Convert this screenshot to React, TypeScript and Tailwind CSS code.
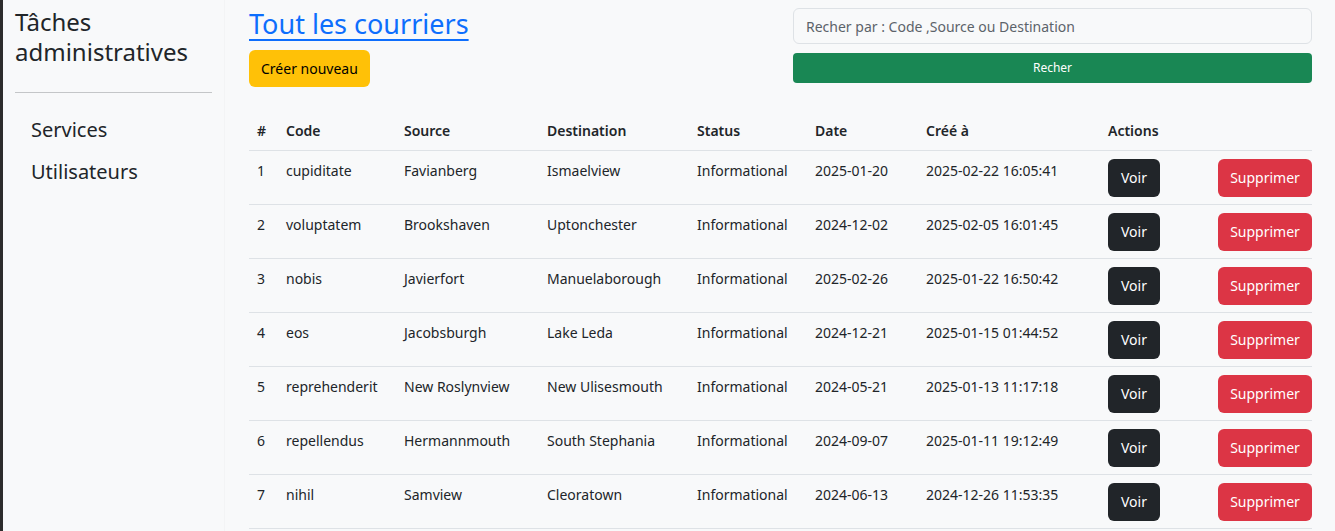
import React from 'react';

type Courrier = {
  code: string;
  source: string;
  destination: string;
  status: string;
  date: string;
  createdAt: string;
};

const courriers: Courrier[] = [
  { code: 'cupiditate', source: 'Favianberg', destination: 'Ismaelview', status: 'Informational', date: '2025-01-20', createdAt: '2025-02-22 16:05:41' },
  { code: 'voluptatem', source: 'Brookshaven', destination: 'Uptonchester', status: 'Informational', date: '2024-12-02', createdAt: '2025-02-05 16:01:45' },
  { code: 'nobis', source: 'Javierfort', destination: 'Manuelaborough', status: 'Informational', date: '2025-02-26', createdAt: '2025-01-22 16:50:42' },
  { code: 'eos', source: 'Jacobsburgh', destination: 'Lake Leda', status: 'Informational', date: '2024-12-21', createdAt: '2025-01-15 01:44:52' },
  { code: 'reprehenderit', source: 'New Roslynview', destination: 'New Ulisesmouth', status: 'Informational', date: '2024-05-21', createdAt: '2025-01-13 11:17:18' },
  { code: 'repellendus', source: 'Hermannmouth', destination: 'South Stephania', status: 'Informational', date: '2024-09-07', createdAt: '2025-01-11 19:12:49' },
  { code: 'nihil', source: 'Samview', destination: 'Cleoratown', status: 'Informational', date: '2024-06-13', createdAt: '2024-12-26 11:53:35' },
];

const Sidebar = () => (
  <aside className="w-[222px] shrink-0 bg-[#f8f9fa] px-3 border-r border-[#f3f4f5]">
    <h3 className="text-[24px] leading-[30px] text-[#212529] pt-[7px]">Tâches administratives</h3>
    <hr className="mt-[25px] border-t border-[#c4c6c8]" />
    <ul className="mt-[23px] pl-4 space-y-[14px]">
      <li className="text-[20px] leading-[28px] text-[#212529]">Services</li>
      <li className="text-[20px] leading-[28px] text-[#212529]">Utilisateurs</li>
    </ul>
  </aside>
);

export default function App() {
  return (
    <div
      className="flex h-[531px] overflow-hidden bg-[#f8f9fa] text-[#212529]"
      style={{ fontFamily: '"Noto Sans", "Open Sans", sans-serif' }}
    >
      <div className="w-[3px] shrink-0 bg-[#2c2c2c]" />
      <Sidebar />
      <main className="flex-1 pl-6 pr-[23px]">
        {/* En-tête : titre + recherche */}
        <div className="flex justify-between">
          <div>
            <a className="block text-[27px] leading-[36px] text-[#0d6efd] underline underline-offset-[5px] decoration-[2px] pt-[6px]">
              Tout les courriers
            </a>
            <button className="mt-[8px] h-[37px] px-3 rounded-md bg-[#ffc107] text-[14px] text-black">
              Créer nouveau
            </button>
          </div>
          <div className="w-[519px] pt-2">
            <div className="h-[36px] rounded-md border border-[#dee2e6] bg-[#f8f9fa] px-3 flex items-center text-[14px] text-[#5c636a]">
              Recher par : Code ,Source ou Destination
            </div>
            <button className="mt-[9px] w-full h-[30px] rounded bg-[#198754] text-[12px] text-white">
              Recher
            </button>
          </div>
        </div>

        {/* Tableau des courriers */}
        <table className="mt-[25px] w-full table-fixed border-collapse text-[14px]">
          <colgroup>
            <col className="w-[29px]" />
            <col className="w-[118px]" />
            <col className="w-[143px]" />
            <col className="w-[150px]" />
            <col className="w-[118px]" />
            <col className="w-[111px]" />
            <col className="w-[182px]" />
            <col className="w-[110px]" />
            <col />
          </colgroup>
          <thead>
            <tr className="border-b border-[#dee2e6]">
              {['#', 'Code', 'Source', 'Destination', 'Status', 'Date', 'Créé à', 'Actions', ''].map((h, i) => (
                <th key={i} className="px-2 py-2 text-left font-semibold leading-[21.6px] whitespace-nowrap">
                  {h}
                </th>
              ))}
            </tr>
          </thead>
          <tbody>
            {courriers.map((c, i) => (
              <tr key={i} className="border-b border-[#dee2e6] align-top">
                <td className="px-2 pt-[9px] leading-[21.6px]">{i + 1}</td>
                <td className="px-2 pt-[9px] leading-[21.6px] whitespace-nowrap">{c.code}</td>
                <td className="px-2 pt-[9px] leading-[21.6px] whitespace-nowrap">{c.source}</td>
                <td className="px-2 pt-[9px] leading-[21.6px] whitespace-nowrap">{c.destination}</td>
                <td className="px-2 pt-[9px] leading-[21.6px] whitespace-nowrap">{c.status}</td>
                <td className="px-2 pt-[9px] leading-[21.6px] whitespace-nowrap">{c.date}</td>
                <td className="px-2 pt-[9px] leading-[21.6px] whitespace-nowrap">{c.createdAt}</td>
                <td className="px-2 pt-2 pb-[7px]">
                  <button className="h-[38px] w-[52px] rounded-md bg-[#212529] text-[14px] text-white">Voir</button>
                </td>
                <td className="pt-2 pb-[7px] text-right">
                  <button className="h-[38px] w-[94px] rounded-md bg-[#dc3545] text-[14px] text-white">Supprimer</button>
                </td>
              </tr>
            ))}
          </tbody>
        </table>
      </main>
    </div>
  );
}
